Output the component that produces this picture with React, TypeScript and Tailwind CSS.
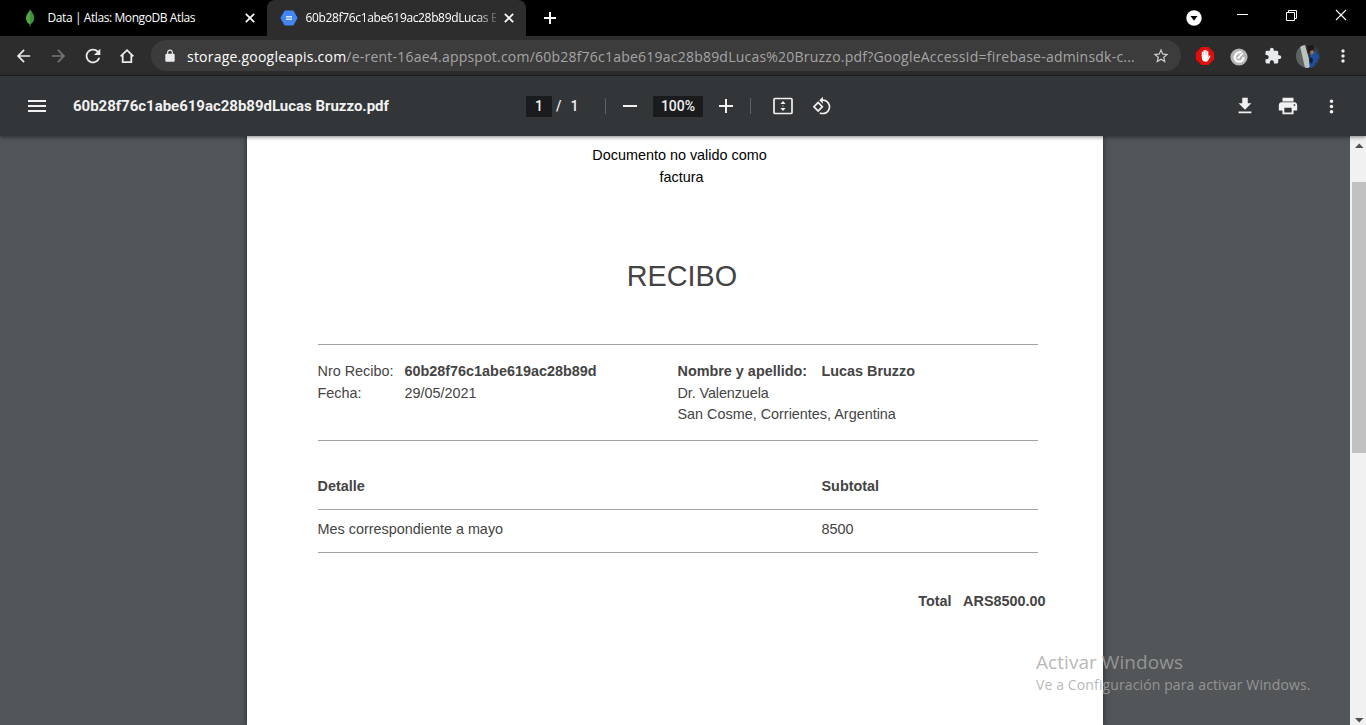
import type { ReactNode } from "react";

const UI = "font-['Open_Sans','Noto_Sans',sans-serif]";

function Slot({ className, children }: { className: string; children: ReactNode }) {
  return <div className={`flex h-full shrink-0 items-center justify-center ${className}`}>{children}</div>;
}

function Glyph({ d, className }: { d: string; className: string }) {
  return (
    <svg viewBox="0 0 24 24" fill="currentColor" className={`shrink-0 ${className}`}>
      <path d={d} />
    </svg>
  );
}

const icons = {
  back: "M20 11H7.83l5.59-5.59L12 4l-8 8 8 8 1.41-1.41L7.83 13H20v-2z",
  forward: "M12 4l-1.41 1.41L16.17 11H4v2h12.17l-5.58 5.59L12 20l8-8z",
  reload:
    "M17.65 6.35C16.2 4.9 14.21 4 12 4c-4.42 0-7.99 3.58-7.99 8s3.57 8 7.99 8c3.73 0 6.84-2.55 7.73-6h-2.08c-.82 2.33-3.04 4-5.65 4-3.31 0-6-2.69-6-6s2.69-6 6-6c1.66 0 3.14.69 4.22 1.78L13 11h7V4l-2.35 2.35z",
  lock: "M18 8h-1V6c0-2.76-2.24-5-5-5S7 3.24 7 6v2H6c-1.1 0-2 .9-2 2v10c0 1.1.9 2 2 2h12c1.1 0 2-.9 2-2V10c0-1.100-.9-2-2-2zM8.900 6c0-1.710 1.390-3.100 3.100-3.100s3.100 1.390 3.100 3.100v2H8.900V6z",
  star: "M22 9.240l-7.190-.62L12 2 9.190 8.630 2 9.240l5.460 4.730L5.820 21 12 17.270 18.180 21l-1.630-7.030L22 9.240zM12 15.400l-3.760 2.270 1-4.280-3.320-2.880 4.380-.38L12 6.100l1.710 4.040 4.380.38-3.320 2.880 1 4.280L12 15.400z",
  puzzle:
    "M20.500 11H19V7c0-1.100-.9-2-2-2h-4V3.500C13 2.120 11.880 1 10.500 1S8 2.120 8 3.500V5H4c-1.100 0-1.990.9-1.990 2v3.800H3.500c1.490 0 2.700 1.210 2.700 2.700s-1.210 2.700-2.700 2.700H2V20c0 1.100.9 2 2 2h3.800v-1.500c0-1.490 1.210-2.700 2.700-2.700 1.490 0 2.700 1.210 2.700 2.700V22H17c1.100 0 2-.9 2-2v-4h1.500c1.380 0 2.500-1.120 2.500-2.500S21.880 11 20.500 11z",
  more: "M12 8c1.100 0 2-.9 2-2s-.9-2-2-2-2 .9-2 2 .9 2 2 2zm0 2c-1.100 0-2 .9-2 2s.9 2 2 2 2-.9 2-2-.9-2-2-2zm0 6c-1.100 0-2 .9-2 2s.9 2 2 2 2-.9 2-2-.9-2-2-2z",
  menu: "M3 18h18v-2H3v2zm0-5h18v-2H3v2zm0-7v2h18V6H3z",
  download: "M19 9h-4V3H9v6H5l7 7 7-7zM5 18v2h14v-2H5z",
  print:
    "M19 8H5c-1.660 0-3 1.340-3 3v6h4v4h12v-4h4v-6c0-1.660-1.340-3-3-3zm-3 11H8v-5h8v5zm3-7c-.55 0-1-.45-1-1s.45-1 1-1 1 .45 1 1-.45 1-1 1zm-1-9H6v4h12V3z",
  rotate:
    "M7.340 6.410L.86 12.900l6.490 6.480 6.490-6.480-6.500-6.490zM3.690 12.900l3.660-3.660L11 12.900l-3.660 3.660-3.650-3.660zm15.670-6.260C17.610 4.880 15.300 4 13 4V.76L8.760 5 13 9.240V6c1.790 0 3.580.68 4.950 2.050 2.730 2.730 2.730 7.170 0 9.900C16.580 19.320 14.790 20 13 20c-.97 0-1.940-.21-2.840-.61l-1.490 1.490C10.020 21.620 11.510 22 13 22c2.300 0 4.610-.88 6.360-2.640 3.520-3.510 3.520-9.210 0-12.720z",
};

function Cross({ className, weight }: { className: string; weight: number }) {
  return (
    <svg viewBox="0 0 12 12" fill="none" stroke="currentColor" strokeWidth={weight} className={`shrink-0 ${className}`}>
      <path d="M1 1l10 10M11 1L1 11" />
    </svg>
  );
}

function TabStrip() {
  return (
    <div className={`flex h-9 bg-black text-white ${UI}`}>
      <div className="flex w-[267px] items-center">
        <svg viewBox="0 0 10 18" className="ml-[25px] h-[18px] w-[10px]">
          <path d="M5 .5C6.500 3 9 5 9 9c0 3.500-2 5-3.600 6.200L5.200 17.500h-.5l-.2-2.300C2.800 14 1 12.300 1 9c0-3.500 3-5.500 4-8.500z" fill="#4faa41" />
          <path d="M5 .5C6.500 3 9 5 9 9c0 3.500-2 5-3.600 6.200L5.200 17.500H5z" fill="#3f9143" />
        </svg>
        <span className="ml-[12.5px] w-[189.5px] text-[12px] tracking-[-0.41px] whitespace-nowrap">Data | Atlas: MongoDB Atlas</span>
        <Cross className="ml-[8px] h-[10px] w-[10px]" weight={2} />
      </div>
      <div className="flex w-[259px] items-center rounded-t-lg bg-[#2d2d2d]">
        <svg viewBox="0 0 18 16" className="ml-[13px] h-4 w-[18px]">
          <path d="M5.500.5h7a1.500 1.500 0 0 1 1.300.7l3.400 6a1.500 1.500 0 0 1 0 1.600l-3.400 6a1.500 1.500 0 0 1-1.300.7h-7a1.500 1.500 0 0 1-1.300-.7l-3.400-6a1.500 1.500 0 0 1 0-1.600l3.400-6A1.500 1.500 0 0 1 5.500.5z" fill="#4285f4" />
          <path d="M6 6h6v1.500H6zM6 8.500h6V10H6z" fill="#d8e6ff" />
        </svg>
        <span className="ml-[7.5px] w-[190.5px] overflow-hidden [mask-image:linear-gradient(to_right,black_170px,transparent_195px)] text-[12px] tracking-[-0.35px] whitespace-nowrap">
          60b28f76c1abe619ac28b89dLucas Bruzzo.pdf
        </span>
        <Cross className="ml-[8px] h-[10px] w-[10px]" weight={2} />
      </div>
      <Slot className="w-[47px]">
        <svg viewBox="0 0 14 14" stroke="white" strokeWidth="2" className="h-[14px] w-[14px]">
          <path d="M7 1v12M1 7h12" />
        </svg>
      </Slot>
      <div className="grow" />
      <Slot className="w-[48px]">
        <svg viewBox="0 0 16 16" className="h-4 w-4">
          <circle cx="8" cy="8" r="7.700" fill="white" />
          <path d="M4.500 6h7L8 10.800z" fill="black" />
        </svg>
      </Slot>
      <Slot className="w-[49px]">
        <div className="mb-[7px] h-px w-[11px] bg-white" />
      </Slot>
      <Slot className="w-[49px]">
        <svg viewBox="0 0 11 11" fill="none" stroke="white" className="mb-[5px] h-[11px] w-[11px]">
          <path d="M.5 2.500h8v8h-8zM2.500 2.500v-2h8v8h-2" />
        </svg>
      </Slot>
      <Slot className="w-[50px]">
        <Cross className="mb-[6px] h-[12px] w-[12px]" weight={1.1} />
      </Slot>
    </div>
  );
}

function AddressBar() {
  return (
    <div className={`flex h-10 items-center border-b border-[#1e1f20] bg-[#2d2d2d] pl-[6px] text-[#e8eaed] ${UI}`}>
      <Slot className="w-[35px]"><Glyph d={icons.back} className="h-5 w-[21px]" /></Slot>
      <Slot className="w-[34px] text-[#757575]"><Glyph d={icons.forward} className="h-5 w-[21px]" /></Slot>
      <Slot className="w-[35px]"><Glyph d={icons.reload} className="h-[22px] w-[22px]" /></Slot>
      <Slot className="w-[34px]">
        <svg viewBox="0 0 14 14" fill="none" stroke="currentColor" strokeWidth="1.800" className="h-[14px] w-[14px]">
          <path d="M.6 7.400L7 1.200l6.400 6.200M2.700 6v7.100h8.600V6" />
        </svg>
      </Slot>
      <div className="ml-[7px] flex h-[31px] w-[1030px] items-center rounded-full bg-[#3c3c3c]">
        <Glyph d={icons.lock} className="ml-[12px] h-[14px] w-[14px]" />
        <p className="ml-[10px] w-[960px] pt-px text-[14px] tracking-[0.22px] whitespace-nowrap text-[#a5a5a5]">
          <span className="text-white">storage.googleapis.com</span>
          /e-rent-16ae4.appspot.com/60b28f76c1abe619ac28b89dLucas%20Bruzzo.pdf?GoogleAccessId=firebase-adminsdk-c...
        </p>
        <Glyph d={icons.star} className="ml-[5px] h-[18px] w-[18px] text-[#cfcfcf]" />
      </div>
      <Slot className="ml-[6px] w-[35px]">
        <svg viewBox="0 0 18 18" className="mt-px h-[18px] w-[18px]">
          <path d="M5.500 0h7L18 5.500v7L12.500 18h-7L0 12.500v-7z" fill="#e40d0d" />
          <path d="M6.500 9V5.200M8.200 9V3.800M9.900 9V3.600M11.600 9V4.800" stroke="white" strokeWidth="1.500" strokeLinecap="round" />
          <path d="M5.800 8h6.600v2.200l1.200-1.500c.6-.3 1 .2.700.8l-2.300 4.300c-1 1.200-4.200 1.300-5.300-.2-.8-1.400-.9-3-.9-5.600z" fill="white" />
        </svg>
      </Slot>
      <Slot className="w-[34px]">
        <svg viewBox="0 0 18 18" className="mt-[2px] h-[18px] w-[18px]">
          <circle cx="9" cy="9" r="8.600" fill="#b5b5b5" />
          <path d="M11.500 4.200C8.500 3.600 4.700 6 4.700 9.200c0 2.700 2 4.400 4.300 4.400 2.700 0 4.500-1.700 4.600-4.500" fill="none" stroke="white" strokeWidth="2.300" />
          <path d="M13 5L8.300 9.700H10" fill="none" stroke="white" strokeWidth="1.700" />
        </svg>
      </Slot>
      <Slot className="w-[34px]"><Glyph d={icons.puzzle} className="h-[18px] w-[18px]" /></Slot>
      <Slot className="w-[36px]">
        <svg viewBox="0 0 24 24" className="h-6 w-6">
          <defs>
            <clipPath id="face"><circle cx="12" cy="12" r="12" /></clipPath>
          </defs>
          <g clipPath="url(#face)">
            <path d="M0 0h24v24H0z" fill="#343a3c" />
            <path d="M0 5l6-3 3 22H4L0 17z" fill="#5b6461" />
            <path d="M4 2l5-1 6 21-3 2H9z" fill="#bcc3bd" />
            <path d="M15 8l5-1 3 6-2 5-2 1-1 5h-4l-1-5z" fill="#1d4ea0" />
            <path d="M11 1h7v6l-6 2z" fill="#21191a" />
            <path d="M14 7l3-1 1 3-3 2z" fill="#9b6d5c" />
            <path d="M14 13l3 2-1 5-3-3z" fill="#171d2e" />
          </g>
        </svg>
      </Slot>
      <Slot className="w-[33px]"><Glyph d={icons.more} className="h-5 w-5" /></Slot>
    </div>
  );
}

function PdfToolbar() {
  return (
    <div className="relative z-10 flex h-[60px] items-center bg-[#323639] font-[Roboto,sans-serif] text-[#f1f1f1] shadow-[0_1px_4px_rgba(0,0,0,0.5)]">
      <Slot className="ml-[20px] w-[34px]"><Glyph d={icons.menu} className="h-6 w-6" /></Slot>
      <span className="ml-[19px] w-[453px] text-[15px] font-bold tracking-[-0.02px] whitespace-nowrap">60b28f76c1abe619ac28b89dLucas Bruzzo.pdf</span>
      <span className="flex h-[21px] w-[26px] items-center justify-center bg-[#191b1c] text-[14px] font-medium">1</span>
      <span className="ml-[4px] flex w-[49px] gap-[9px] text-[14px] font-medium"><span>/</span><span>1</span></span>
      <div className="h-4 w-px bg-[#5f6365]" />
      <Slot className="w-[47px]"><div className="h-[2px] w-[14px] bg-[#f1f1f1]" /></Slot>
      <span className="flex h-[21px] w-[50px] items-center justify-center bg-[#191b1c] text-[14px] font-medium">100%</span>
      <Slot className="mr-px w-[46px]">
        <svg viewBox="0 0 14 14" stroke="currentColor" strokeWidth="2" className="h-[14px] w-[14px]">
          <path d="M7 0v14M0 7h14" />
        </svg>
      </Slot>
      <div className="h-4 w-px bg-[#5f6365]" />
      <Slot className="ml-[13px] w-[38px]">
        <svg viewBox="0 0 20 18" fill="none" className="h-[18px] w-5">
          <rect x="1" y="1.500" width="18" height="15" rx="1" stroke="currentColor" strokeWidth="1.700" />
          <path d="M10 4l2.600 3H7.400zM10 14l2.600-3H7.400zM9.500 8.500h1v1h-1z" fill="currentColor" />
        </svg>
      </Slot>
      <Slot className="w-[39px]"><Glyph d={icons.rotate} className="h-5 w-5" /></Slot>
      <div className="grow" />
      <Slot className="w-[43px]"><Glyph d={icons.download} className="h-[22px] w-[22px]" /></Slot>
      <Slot className="w-[43px]"><Glyph d={icons.print} className="h-[22px] w-[22px]" /></Slot>
      <Slot className="mr-[13px] w-[44px]"><Glyph d={icons.more} className="h-[21px] w-[21px]" /></Slot>
    </div>
  );
}

function Receipt() {
  return (
    <div className="h-full w-[856px] bg-white pt-[9px] pl-[71px] font-['Liberation_Sans',Arial,sans-serif] text-[14.4px] leading-[21.6px] text-[#444] shadow-[0_0_6px_rgba(0,0,0,0.55)]">
      <div className="flex w-[720px] flex-col items-center text-black">
        <p className="ml-[3px]">Documento no valido como</p>
        <p className="ml-[7px]">factura</p>
      </div>
      <h1 className="mt-[72px] ml-[4px] w-[720px] text-center text-[28.8px] leading-[32px]">RECIBO</h1>
      <div className="mt-[52px] flex h-[97px] w-[720px] border-y border-[#a2a2a2] pt-[16px]">
        <div className="-ml-[0.5px] w-[87px]"><p>Nro Recibo:</p><p>Fecha:</p></div>
        <div className="w-[273px]"><p className="font-bold">60b28f76c1abe619ac28b89d</p><p>29/05/2021</p></div>
        <div>
          <p className="flex font-bold"><span className="w-[144px]">Nombre y apellido:</span><span>Lucas Bruzzo</span></p>
          <p className="tracking-[-0.1px]">Dr. Valenzuela</p>
          <p>San Cosme, Corrientes, Argentina</p>
        </div>
      </div>
      <div className="flex h-[69px] w-[720px] border-b border-[#a2a2a2] pt-[35px] font-bold">
        <span className="-ml-[0.5px] w-[504px]">Detalle</span><span>Subtotal</span>
      </div>
      <div className="flex h-[43px] w-[720px] border-b border-[#a2a2a2] pt-[9px]">
        <span className="-ml-[0.5px] w-[504px]">Mes correspondiente a mayo</span><span>8500</span>
      </div>
      <div className="mt-[38px] flex w-[727.5px] justify-end gap-[11.5px] font-bold">
        <span>Total</span><span>ARS8500.00</span>
      </div>
    </div>
  );
}

function Scrollbar() {
  return (
    <div className="flex w-4 shrink-0 flex-col bg-[#f1f1f1]">
      <svg viewBox="0 0 16 46" className="h-[46px] w-4"><path d="M5 12h8.500L9.200 7.500z" fill="#505050" /></svg>
      <div className="ml-[2px] h-[271px] w-[14px] bg-[#c1c1c1]" />
      <div className="grow" />
      <svg viewBox="0 0 16 17" className="h-[17px] w-4"><path d="M5 10h8.500L9.200 14.500z" fill="#505050" /></svg>
    </div>
  );
}

export default function App() {
  return (
    <div className="relative flex h-[725px] w-[1366px] flex-col overflow-hidden bg-[#525659]">
      <TabStrip />
      <AddressBar />
      <PdfToolbar />
      <div className="flex h-[589px]">
        <div className="flex grow justify-center"><Receipt /></div>
        <Scrollbar />
      </div>
      <div className={`absolute top-[650px] left-[1036px] z-20 text-[#a6a6a6]/80 ${UI}`}>
        <p className="text-[19px] leading-[25px] tracking-[0.05px] whitespace-nowrap">Activar Windows</p>
        <p className="text-[14px] leading-[20px] tracking-[0.12px] whitespace-nowrap">Ve a Configuración para activar Windows.</p>
      </div>
    </div>
  );
}
